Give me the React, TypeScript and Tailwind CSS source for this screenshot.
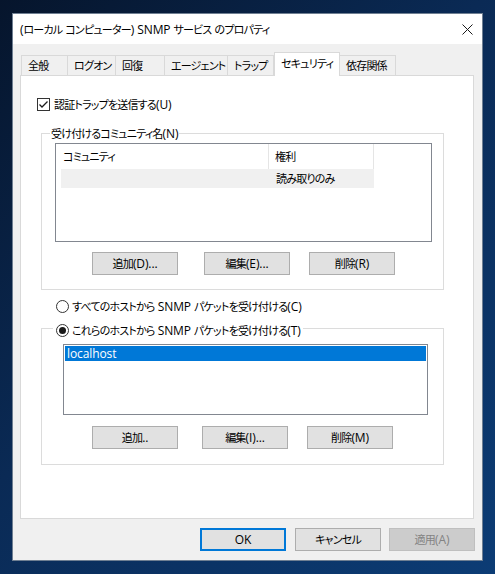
import React from 'react';

// Latin runs are set at 12px with normal tracking; CJK runs stay tight like Yu Gothic UI.
function T({ children }: { children: string }) {
  const parts = children.split(/([\x20-\x7e]+)/);
  return (
    <>
      {parts.map((p, i) =>
        i % 2 === 1 ? (
          <span key={i} className="text-[12px] tracking-[-0.1px]">
            {p}
          </span>
        ) : (
          <React.Fragment key={i}>{p}</React.Fragment>
        ),
      )}
    </>
  );
}

const tabs = [
  { label: '全般', w: 'w-[47px]' },
  { label: 'ログオン', w: 'w-[48px]' },
  { label: '回復', w: 'w-[49px]' },
  { label: 'エージェント', w: 'w-[63px]' },
  { label: 'トラップ', w: 'w-[46px]' },
  { label: 'セキュリティ', w: 'w-[66px]', active: true },
  { label: '依存関係', w: 'w-[56px]' },
];

function Button({
  label,
  className = '',
  variant = 'normal',
}: {
  label: string;
  className?: string;
  variant?: 'normal' | 'default' | 'disabled';
}) {
  const look =
    variant === 'default'
      ? 'border-2 border-[#0078d7] bg-[#e1e1e1] text-black'
      : variant === 'disabled'
        ? 'border border-[#bfbfbf] bg-[#cccccc] text-[#838383]'
        : 'border border-[#adadad] bg-[#e1e1e1] text-black';
  return (
    <div className={`flex h-[23px] w-[86px] shrink-0 items-center justify-center whitespace-nowrap ${look} ${className}`}>
      <T>{label}</T>
    </div>
  );
}

function Radio({ checked = false }: { checked?: boolean }) {
  return (
    <svg width="13" height="13" viewBox="0 0 13 13" className="shrink-0">
      <circle cx="6.5" cy="6.5" r="6" fill="white" stroke="#333333" strokeWidth="1" />
      {checked && <circle cx="6.5" cy="6.5" r="3.5" fill="#1a1a1a" />}
    </svg>
  );
}

function Checkbox() {
  return (
    <svg width="13" height="13" viewBox="0 0 13 13" className="shrink-0">
      <rect x="0.5" y="0.5" width="12" height="12" fill="white" stroke="#333333" />
      <path d="M2.5 6.5 L5 9 L10.5 3.5" fill="none" stroke="#1a1a1a" strokeWidth="1.3" />
    </svg>
  );
}

export default function App() {
  return (
    <div className="h-[574px] w-[495px] overflow-hidden whitespace-nowrap bg-[linear-gradient(135deg,#06152c_0%,#0a2a55_45%,#0c3c75_100%)] pl-[12px] pt-[13px] font-['Open_Sans','Noto_Sans_CJK_JP',sans-serif] text-[11px] leading-none tracking-[-0.8px] text-black [font-feature-settings:'palt']">
      <div className="flex h-[548px] w-[471px] flex-col border border-[#6f7f92] bg-[#f0f0f0]">
        {/* title bar */}
        <div className="flex h-[30px] shrink-0 items-center justify-between bg-white pl-[7px] pr-[9px]">
          <span className="pt-[1px]">
            <T>(ローカル コンピューター) SNMP サービス のプロパティ</T>
          </span>
          <svg width="11" height="11" viewBox="0 0 11 11">
            <path d="M0.5 0.5 L10.5 10.5 M10.5 0.5 L0.5 10.5" stroke="#1a1a1a" strokeWidth="1" />
          </svg>
        </div>

        {/* tabs */}
        <div className="ml-[8px] mt-[8px] flex h-[23px] items-end">
          {tabs.map((t, i) =>
            t.active ? (
              <div
                key={t.label}
                className={`relative z-10 -mb-[1px] flex h-[24px] ${t.w} items-center border-x border-t border-[#d9d9d9] bg-white pb-[3px] pl-[6px]`}
              >
                {t.label}
              </div>
            ) : (
              <div
                key={t.label}
                className={`flex h-[20px] ${t.w} items-center border-t border-r border-[#d9d9d9] bg-[#f0f0f0] pl-[6px] ${i === 0 ? 'border-l' : ''}`}
              >
                {t.label}
              </div>
            ),
          )}
        </div>

        {/* tab panel */}
        <div className="ml-[7px] flex h-[444px] w-[454px] flex-col border border-[#d9d9d9] bg-white">
          <div className="ml-[16px] mt-[22px] flex items-center gap-[4px]">
            <Checkbox />
            <span>
              <T>認証トラップを送信する(U)</T>
            </span>
          </div>

          {/* community group */}
          <div className="relative ml-[20px] mt-[22px] flex h-[157px] w-[403px] flex-col border border-[#dcdcdc]">
            <span className="absolute -top-[6px] left-[8px] bg-white px-[1px]">
              <T>受け付けるコミュニティ名(N)</T>
            </span>
            <div className="ml-[13px] mt-[9px] flex h-[99px] w-[377px] flex-col border border-[#828790] bg-white">
              <div className="flex h-[25px] shrink-0">
                <div className="flex w-[213px] items-center border-r border-[#e5e5e5] pl-[7px]">コミュニティ</div>
                <div className="flex w-[105px] items-center border-r border-[#e5e5e5] pl-[6px]">権利</div>
              </div>
              <div className="ml-[5px] flex h-[19px] w-[313px] items-center bg-[#f0f0f0]">
                <span className="ml-[215px]">読み取りのみ</span>
              </div>
            </div>
            <div className="ml-[50px] mt-[10px] flex">
              <Button label="追加(D)..." className="w-[85px]" />
              <Button label="編集(E)..." className="ml-[26px]" />
              <Button label="削除(R)" className="ml-[19px]" />
            </div>
          </div>

          <div className="ml-[35px] mt-[10px] flex items-center gap-[3px]">
            <Radio />
            <span>
              <T>すべてのホストから SNMP パケットを受け付ける(C)</T>
            </span>
          </div>

          {/* hosts group */}
          <div className="relative ml-[20px] mt-[15px] flex h-[137px] w-[403px] flex-col border border-[#dcdcdc]">
            <div className="absolute -top-[5px] left-[11px] flex items-center gap-[3px] bg-white pl-[3px] pr-[2px]">
              <Radio checked />
              <span>
                <T>これらのホストから SNMP パケットを受け付ける(T)</T>
              </span>
            </div>
            <div className="ml-[21px] mt-[15px] h-[71px] w-[365px] border border-[#828790] bg-white p-[1px]">
              <div className="flex h-[15px] items-center bg-[#0078d7] pl-[2px] text-white">
                <T>localhost</T>
              </div>
            </div>
            <div className="ml-[50px] mt-[11px] flex">
              <Button label="追加.." className="w-[85px]" />
              <Button label="編集(I)..." className="ml-[24px]" />
              <Button label="削除(M)" className="ml-[19px]" />
            </div>
          </div>
        </div>

        {/* dialog buttons */}
        <div className="ml-[187px] mt-[9px] flex">
          <Button label="OK" variant="default" />
          <Button label="キャンセル" className="ml-[9px]" />
          <Button label="適用(A)" variant="disabled" className="ml-[8px]" />
        </div>
      </div>
    </div>
  );
}
